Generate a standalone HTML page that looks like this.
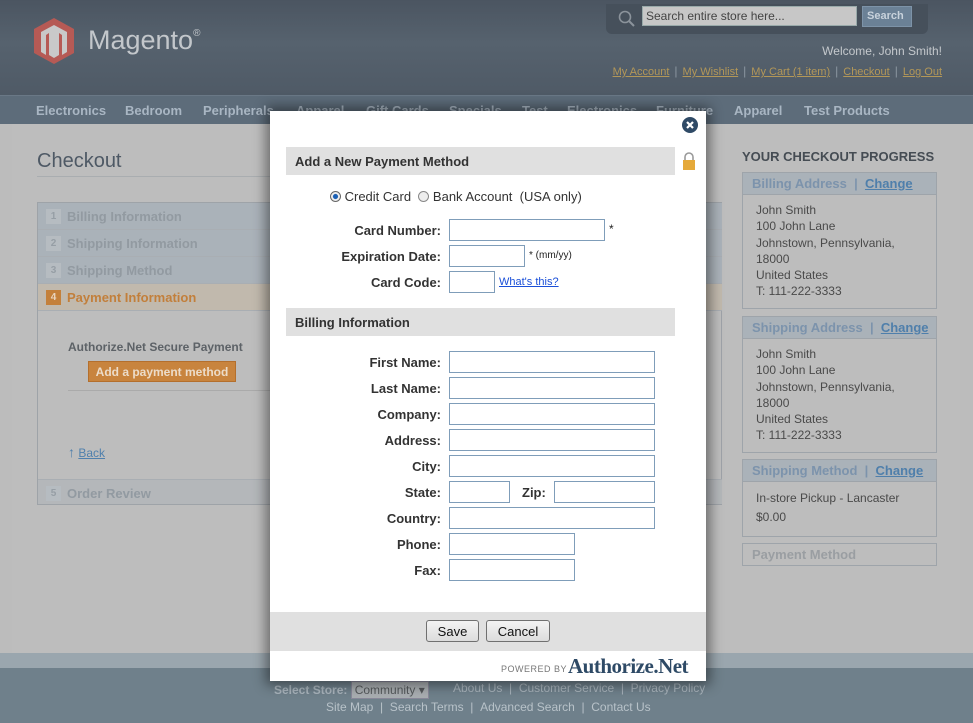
<!DOCTYPE html>
<html><head><meta charset="utf-8"><style>
*{margin:0;padding:0;box-sizing:border-box}
body{width:973px;height:723px;overflow:hidden;position:relative;background:#bcbcbc;font-family:"Liberation Sans",sans-serif;font-size:12px}
.a{position:absolute}
#hdr{left:0;top:0;width:973px;height:95px;background:linear-gradient(180deg,#4b5561 0,#56626e 45%,#4f5a66 100%)}
#nav{left:0;top:95px;width:973px;height:29px;background:#5d6c7a;border-top:1px solid #6a7886}
#nav span{position:absolute;top:7px;color:#a9b6c3;font-weight:bold;font-size:13px}
.tl a{color:#b39758;text-decoration:underline;font-size:11px}
.tl i{color:#8b96a0;font-style:normal;margin:0 5px}
.step{position:absolute;left:38px;width:684px;height:27px;border-bottom:1px solid #a9aeb3;background:#aab2b9;color:#929aa1;font-weight:bold;font-size:13px}
.step b{position:absolute;left:8px;top:6px;width:15px;height:15px;background:#b6bcc1;color:#969ea5;font-size:10px;text-align:center;line-height:15px}
.step span{position:absolute;left:29px;top:6px}
.box{position:absolute;left:742px;width:195px;border:1px solid #9ea4aa;background:#bdbdbd}
.box .h{height:22px;background:#aab2b9;border-bottom:1px solid #9ea4aa;color:#7c93ac;font-weight:bold;font-size:13px;padding:3px 0 0 9px}
.box .h u{color:#4f7fab}
.box .b{padding:7px 0 0 13px;color:#4a4a4a;font-size:12px;line-height:16.3px}
#modal{left:270px;top:111px;width:436px;height:570px;background:#fff;box-shadow:0 0 12px 4px rgba(0,0,0,.45);font-family:"Liberation Sans",sans-serif;color:#222}
.bar{position:absolute;left:16px;width:389px;height:28px;background:#e0e0e0;font-weight:bold;font-size:13px;padding:7px 0 0 9px;color:#333}
.lbl{position:absolute;right:265px;font-weight:bold;font-size:13px;color:#333;text-align:right;white-space:nowrap}
.in{position:absolute;border:1px solid #7f9db9;height:22px;background:#fff}
.btn{position:absolute;top:509px;height:22px;border:1px solid #707070;border-radius:3px;background:linear-gradient(#f3f3f3,#dcdcdc);font-size:13px;text-align:center;padding-top:3px;color:#111}
</style></head><body>
<div class="a" id="hdr">
 <svg class="a" style="left:34px;top:18px" width="40" height="46" viewBox="0 0 40 46"><polygon points="20,0 40,11 40,35 20,46 0,35 0,11" fill="#b65a55"/><path d="M7 34V14l13-7 13 7v20l-5 3V17l-3-2v22l-5 3-5-3V15l-3 2v20z" fill="#c9c9c9"/></svg>
 <div class="a" style="left:88px;top:25px;color:#c3c7cb;font-size:27px">Magento<sup style="font-size:10px;vertical-align:13px">®</sup></div>
 <div class="a" style="left:606px;top:4px;width:322px;height:30px;background:#46505b;border-radius:0 0 6px 6px"></div>
 <svg class="a" style="left:618px;top:10px" width="18" height="18"><circle cx="7" cy="7" r="5.5" fill="none" stroke="#8b939b" stroke-width="1.6"/><line x1="11" y1="11" x2="16" y2="16" stroke="#8b939b" stroke-width="2"/></svg>
 <div class="a" style="left:642px;top:6px;width:215px;height:20px;background:#c7c7c7;border:1px solid #9aa;color:#444;font-size:12px;padding:2px 3px">Search entire store here...</div>
 <div class="a" style="left:862px;top:6px;width:50px;height:21px;background:#6b8196;border:1px solid #7d93a8;color:#c8d2dc;font-weight:bold;font-size:11px;padding:3px 0 0 4px">Search</div>
 <div class="a" style="right:31px;top:44px;color:#c4c8cc;font-size:12px">Welcome, John Smith!</div>
 <div class="a tl" style="right:31px;top:64px"><a>My Account</a><i>|</i><a>My Wishlist</a><i>|</i><a>My Cart (1 item)</a><i>|</i><a>Checkout</a><i>|</i><a>Log Out</a></div>
</div>
<div class="a" id="nav"><span style="left:36px">Electronics</span><span style="left:125px">Bedroom</span><span style="left:203px">Peripherals</span><span style="left:296px">Apparel</span><span style="left:366px">Gift Cards</span><span style="left:449px">Specials</span><span style="left:522px">Test</span><span style="left:567px">Electronics</span><span style="left:656px">Furniture</span><span style="left:734px">Apparel</span><span style="left:804px">Test Products</span></div>
<div class="a" style="left:12px;top:124px;width:948px;height:529px;background:#bdbdbd"></div>
<div class="a" style="left:37px;top:150px;color:#4e5965;font-size:20px">Checkout</div>
<div class="a" style="left:37px;top:176px;width:240px;border-top:1px solid #a9adb0"></div>
<div class="a" style="left:37px;top:202px;width:685px;height:303px;border:1px solid #9ea3a8"></div>
<div class="step" style="top:203px"><b>1</b><span>Billing Information</span></div>
<div class="step" style="top:230px"><b>2</b><span>Shipping Information</span></div>
<div class="step" style="top:257px"><b>3</b><span>Shipping Method</span></div>
<div class="step" style="top:284px;background:#c1b9ad;color:#c27f3b"><b style="background:#c4803a;color:#e8d5c0">4</b><span>Payment Information</span></div>
<div class="a" style="left:68px;top:340px;color:#5d6267;font-weight:bold;font-size:12px">Authorize.Net Secure Payment</div>
<div class="a" style="left:88px;top:361px;width:148px;height:21px;background:#c8843e;border:1px solid #b46f2d;color:#ecdcc9;font-weight:bold;font-size:12px;text-align:center;padding-top:3px">Add a payment method</div>
<div class="a" style="left:68px;top:390px;width:210px;border-top:1px solid #aaa"></div>
<div class="a" style="left:68px;top:444px;color:#5080ad;font-size:12px"><b style="font-size:14px">↑</b> <u>Back</u></div>
<div class="step" style="top:479px;border-top:1px solid #a9aeb3;border-bottom:none;height:25px;background:#b4b7ba"><b>5</b><span>Order Review</span></div>
<div class="a" style="left:742px;top:149px;color:#454c53;font-weight:bold;font-size:13px">YOUR CHECKOUT PROGRESS</div>
<div class="box" style="top:172px;height:137px"><div class="h">Billing Address &nbsp;| &nbsp;<u>Change</u></div><div class="b">John Smith<br>100 John Lane<br>Johnstown, Pennsylvania,<br>18000<br>United States<br>T: 111-222-3333</div></div>
<div class="box" style="top:316px;height:137px"><div class="h">Shipping Address &nbsp;| &nbsp;<u>Change</u></div><div class="b">John Smith<br>100 John Lane<br>Johnstown, Pennsylvania,<br>18000<br>United States<br>T: 111-222-3333</div></div>
<div class="box" style="top:459px;height:78px"><div class="h">Shipping Method &nbsp;| &nbsp;<u>Change</u></div><div class="b" style="line-height:19px">In-store Pickup - Lancaster<br>$0.00</div></div>
<div class="box" style="top:543px;height:23px"><div class="h" style="background:none;border:none;color:#9a9ea2">Payment Method</div></div>
<div class="a" style="left:0;top:653px;width:973px;height:15px;background:#9aa6ae"></div>
<div class="a" style="left:0;top:668px;width:973px;height:55px;background:#6f808b"></div>
<div class="a" style="left:274px;top:681px;color:#a9b4bc;font-size:12px;font-weight:bold">Select Store: <span style="display:inline-block;background:#a9aeb1;color:#55595c;font-weight:normal;padding:1px 3px;border:1px solid #889">Community ▾</span></div>
<div class="a" style="left:453px;top:681px;color:#a9b4bc;font-size:12px">About Us &nbsp;| &nbsp;Customer Service &nbsp;| &nbsp;Privacy Policy</div>
<div class="a" style="left:326px;top:700px;color:#b8c2c9;font-size:12px">Site Map &nbsp;| &nbsp;Search Terms &nbsp;| &nbsp;Advanced Search &nbsp;| &nbsp;Contact Us</div>

<div class="a" id="modal">
 <svg class="a" style="left:412px;top:6px" width="16" height="16"><circle cx="8" cy="8" r="8" fill="#2f4a66"/><path d="M5 5l6 6M11 5l-6 6" stroke="#fff" stroke-width="2.2"/></svg>
 <svg class="a" style="left:412px;top:41px" width="14" height="18"><path d="M3 8V5a4 4 0 0 1 8 0v3" fill="none" stroke="#999" stroke-width="1.6"/><rect x="1" y="8" width="12" height="10" fill="#e5a93a"/></svg>
 <div class="bar" style="top:36px">Add a New Payment Method</div>
 <div class="a" style="left:60px;top:78px;font-size:13px;color:#333"><span style="display:inline-block;width:11px;height:11px;border-radius:50%;border:1px solid #666;background:radial-gradient(#1a5fb4 35%,#eee 45%);vertical-align:-1px"></span> Credit Card &nbsp;<span style="display:inline-block;width:11px;height:11px;border-radius:50%;border:1px solid #888;background:#eee;vertical-align:-1px"></span> Bank Account &nbsp;(USA only)</div>
 <div class="lbl" style="top:112px">Card Number:</div><div class="in" style="left:179px;top:108px;width:156px"></div><div class="a" style="left:339px;top:111px">*</div>
 <div class="lbl" style="top:138px">Expiration Date:</div><div class="in" style="left:179px;top:134px;width:76px"></div><div class="a" style="left:259px;top:139px;font-size:10px">* (mm/yy)</div>
 <div class="lbl" style="top:164px">Card Code:</div><div class="in" style="left:179px;top:160px;width:46px"></div><div class="a" style="left:229px;top:165px;font-size:11px;color:#1a4fd8;text-decoration:underline">What's this?</div>
 <div class="bar" style="top:197px">Billing Information</div>
 <div class="lbl" style="top:244px">First Name:</div><div class="in" style="left:179px;top:240px;width:206px"></div>
 <div class="lbl" style="top:270px">Last Name:</div><div class="in" style="left:179px;top:266px;width:206px"></div>
 <div class="lbl" style="top:296px">Company:</div><div class="in" style="left:179px;top:292px;width:206px"></div>
 <div class="lbl" style="top:322px">Address:</div><div class="in" style="left:179px;top:318px;width:206px"></div>
 <div class="lbl" style="top:348px">City:</div><div class="in" style="left:179px;top:344px;width:206px"></div>
 <div class="lbl" style="top:374px">State:</div><div class="in" style="left:179px;top:370px;width:61px"></div>
 <div class="a" style="left:252px;top:374px;font-weight:bold;font-size:13px;color:#333">Zip:</div><div class="in" style="left:284px;top:370px;width:101px"></div>
 <div class="lbl" style="top:400px">Country:</div><div class="in" style="left:179px;top:396px;width:206px"></div>
 <div class="lbl" style="top:426px">Phone:</div><div class="in" style="left:179px;top:422px;width:126px"></div>
 <div class="lbl" style="top:452px">Fax:</div><div class="in" style="left:179px;top:448px;width:126px"></div>
 <div class="a" style="left:0;top:501px;width:436px;height:39px;background:#e0e0e0"></div>
 <div class="btn" style="left:156px;width:53px">Save</div>
 <div class="btn" style="left:216px;width:64px">Cancel</div>
 <div class="a" style="left:231px;top:553px;font-size:9px;color:#777;letter-spacing:.5px">POWERED BY</div>
 <div class="a" style="left:298px;top:543px;font-family:'Liberation Serif',serif;font-weight:bold;font-size:21px;color:#2e4a66;letter-spacing:-.5px">Authorize.Net</div>
</div>
</body></html>
